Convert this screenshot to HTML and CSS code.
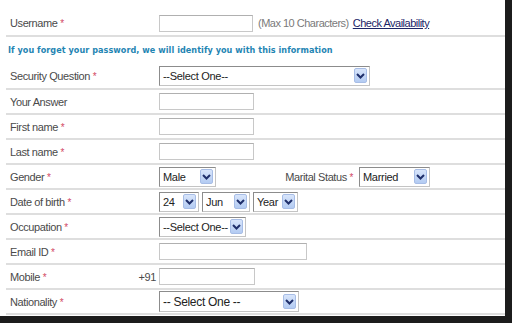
FILE: index.html
```html
<!DOCTYPE html>
<html lang="en">
<head>
    <meta charset="UTF-8">
    <title>Registration</title>
    <link rel="stylesheet" href="styles.css">
</head>
<body>
<div class="frame">
    <form class="reg-form">
        <div class="row row-first">
            <span class="label">Username <span class="req">*</span></span>
            <span class="input w94"></span>
            <span class="hint">(Max 10 Characters)</span>
            <a class="check" href="#">Check Availability</a>
        </div>
        <div class="info">If you forget your password, we will identify you with this information</div>
        <div class="row row-sec">
            <span class="label">Security Question <span class="req">*</span></span>
            <span class="select w211"><span class="val">--Select One--</span><span class="arrow"><svg width="9" height="6" viewBox="0 0 9 6"><path d="M1 1 L4.5 4.5 L8 1" fill="none" stroke="#1f2f6b" stroke-width="2"/></svg></span></span>
        </div>
        <div class="row">
            <span class="label">Your Answer</span>
            <span class="input w95"></span>
        </div>
        <div class="row">
            <span class="label">First name <span class="req">*</span></span>
            <span class="input w95"></span>
        </div>
        <div class="row">
            <span class="label">Last name <span class="req">*</span></span>
            <span class="input w95"></span>
        </div>
        <div class="row">
            <span class="label">Gender <span class="req">*</span></span>
            <span class="select w57"><span class="val">Male</span><span class="arrow"><svg width="9" height="6" viewBox="0 0 9 6"><path d="M1 1 L4.5 4.5 L8 1" fill="none" stroke="#1f2f6b" stroke-width="2"/></svg></span></span>
            <span class="sub-label">Marital Status <span class="req">*</span></span>
            <span class="select w71"><span class="val">Married</span><span class="arrow"><svg width="9" height="6" viewBox="0 0 9 6"><path d="M1 1 L4.5 4.5 L8 1" fill="none" stroke="#1f2f6b" stroke-width="2"/></svg></span></span>
        </div>
        <div class="row">
            <span class="label">Date of birth <span class="req">*</span></span>
            <span class="dob">
                <span class="select w40"><span class="val">24</span><span class="arrow"><svg width="9" height="6" viewBox="0 0 9 6"><path d="M1 1 L4.5 4.5 L8 1" fill="none" stroke="#1f2f6b" stroke-width="2"/></svg></span></span>
                <span class="select w48"><span class="val">Jun</span><span class="arrow"><svg width="9" height="6" viewBox="0 0 9 6"><path d="M1 1 L4.5 4.5 L8 1" fill="none" stroke="#1f2f6b" stroke-width="2"/></svg></span></span>
                <span class="select w45"><span class="val">Year</span><span class="arrow"><svg width="9" height="6" viewBox="0 0 9 6"><path d="M1 1 L4.5 4.5 L8 1" fill="none" stroke="#1f2f6b" stroke-width="2"/></svg></span></span>
            </span>
        </div>
        <div class="row">
            <span class="label">Occupation <span class="req">*</span></span>
            <span class="select w87"><span class="val">--Select One--</span><span class="arrow"><svg width="9" height="6" viewBox="0 0 9 6"><path d="M1 1 L4.5 4.5 L8 1" fill="none" stroke="#1f2f6b" stroke-width="2"/></svg></span></span>
        </div>
        <div class="row">
            <span class="label">Email ID <span class="req">*</span></span>
            <span class="input w148"></span>
        </div>
        <div class="row">
            <span class="label label-split"><span>Mobile <span class="req">*</span></span><span class="code">+91</span></span>
            <span class="input w96"></span>
        </div>
        <div class="row row-last">
            <span class="label">Nationality <span class="req">*</span></span>
            <span class="select w140 tall"><span class="val big">-- Select One --</span><span class="arrow"><svg width="9" height="6" viewBox="0 0 9 6"><path d="M1 1 L4.5 4.5 L8 1" fill="none" stroke="#1f2f6b" stroke-width="2"/></svg></span></span>
        </div>
    </form>
</div>
</body>
</html>
```

FILE: styles.css
```css
body {
    margin: 0;
    background-color: #1c1c1c;
    font-family: "Liberation Sans", Arial, sans-serif;
}
.frame {
    width: 505px;
    height: 316px;
    background-color: #fff;
    overflow: hidden;
}
.reg-form {
    padding: 11px 0 0 6px;
}
.row {
    display: flex;
    align-items: center;
    height: 25px;
    box-sizing: border-box;
    border-bottom: 2px solid #dedede;
    font-size: 11px;
    letter-spacing: -0.4px;
    color: #4a4a4a;
}
.row-first {
    height: 26px;
}
.row-sec {
    height: 27px;
}
.label {
    width: 153px;
    padding-left: 4px;
    box-sizing: border-box;
    flex-shrink: 0;
}
.label-split {
    display: flex;
    align-items: center;
}
.code {
    margin-left: auto;
    padding-right: 3px;
}
.req {
    color: #d24a66;
    font-size: 10px;
}
.input {
    height: 17px;
    box-sizing: border-box;
    border: 1px solid #c8c8c8;
    border-top-color: #b0b0b0;
    background-color: #fff;
}
.w94 { width: 94px; }
.w95 { width: 95px; }
.w96 { width: 96px; }
.w148 { width: 148px; }
.w211 { width: 211px; }
.w57 { width: 57px; }
.w71 { width: 71px; }
.w40 { width: 40px; }
.w48 { width: 48px; }
.w45 { width: 45px; }
.w87 { width: 87px; }
.w140 { width: 140px; }
.hint {
    margin-left: 5px;
    color: #7a7a7a;
    letter-spacing: -0.5px;
}
.check {
    margin-left: 4px;
    color: #1c2466;
    text-decoration: underline;
    letter-spacing: -0.5px;
}
.info {
    height: 26px;
    padding-left: 2px;
    display: flex;
    align-items: center;
    font-family: "DejaVu Sans Condensed", "DejaVu Sans", sans-serif;
    font-weight: bold;
    font-size: 9px;
    letter-spacing: 0.05px;
    color: #1f85b3;
}
.select {
    display: flex;
    align-items: center;
    justify-content: space-between;
    height: 20px;
    box-sizing: border-box;
    border: 1px solid #8c8c8c;
    border-right-color: #c4c4c4;
    border-bottom-color: #c4c4c4;
    padding: 0 2px 0 3px;
    background-color: #fff;
    color: #222;
}
.select.tall {
    height: 21px;
}
.val {
    font-size: 11px;
    letter-spacing: -0.3px;
}
.val.big {
    font-size: 12px;
}
.arrow {
    display: flex;
    align-items: center;
    justify-content: center;
    width: 13px;
    height: 15px;
    box-sizing: border-box;
    border: 1px solid #a7bde6;
    border-radius: 2px;
    background: linear-gradient(#d8e5fb, #b3cbf2);
}
.sub-label {
    width: 143px;
    text-align: right;
    padding-right: 6px;
    box-sizing: border-box;
}
.dob {
    display: flex;
    gap: 3px;
}
```
